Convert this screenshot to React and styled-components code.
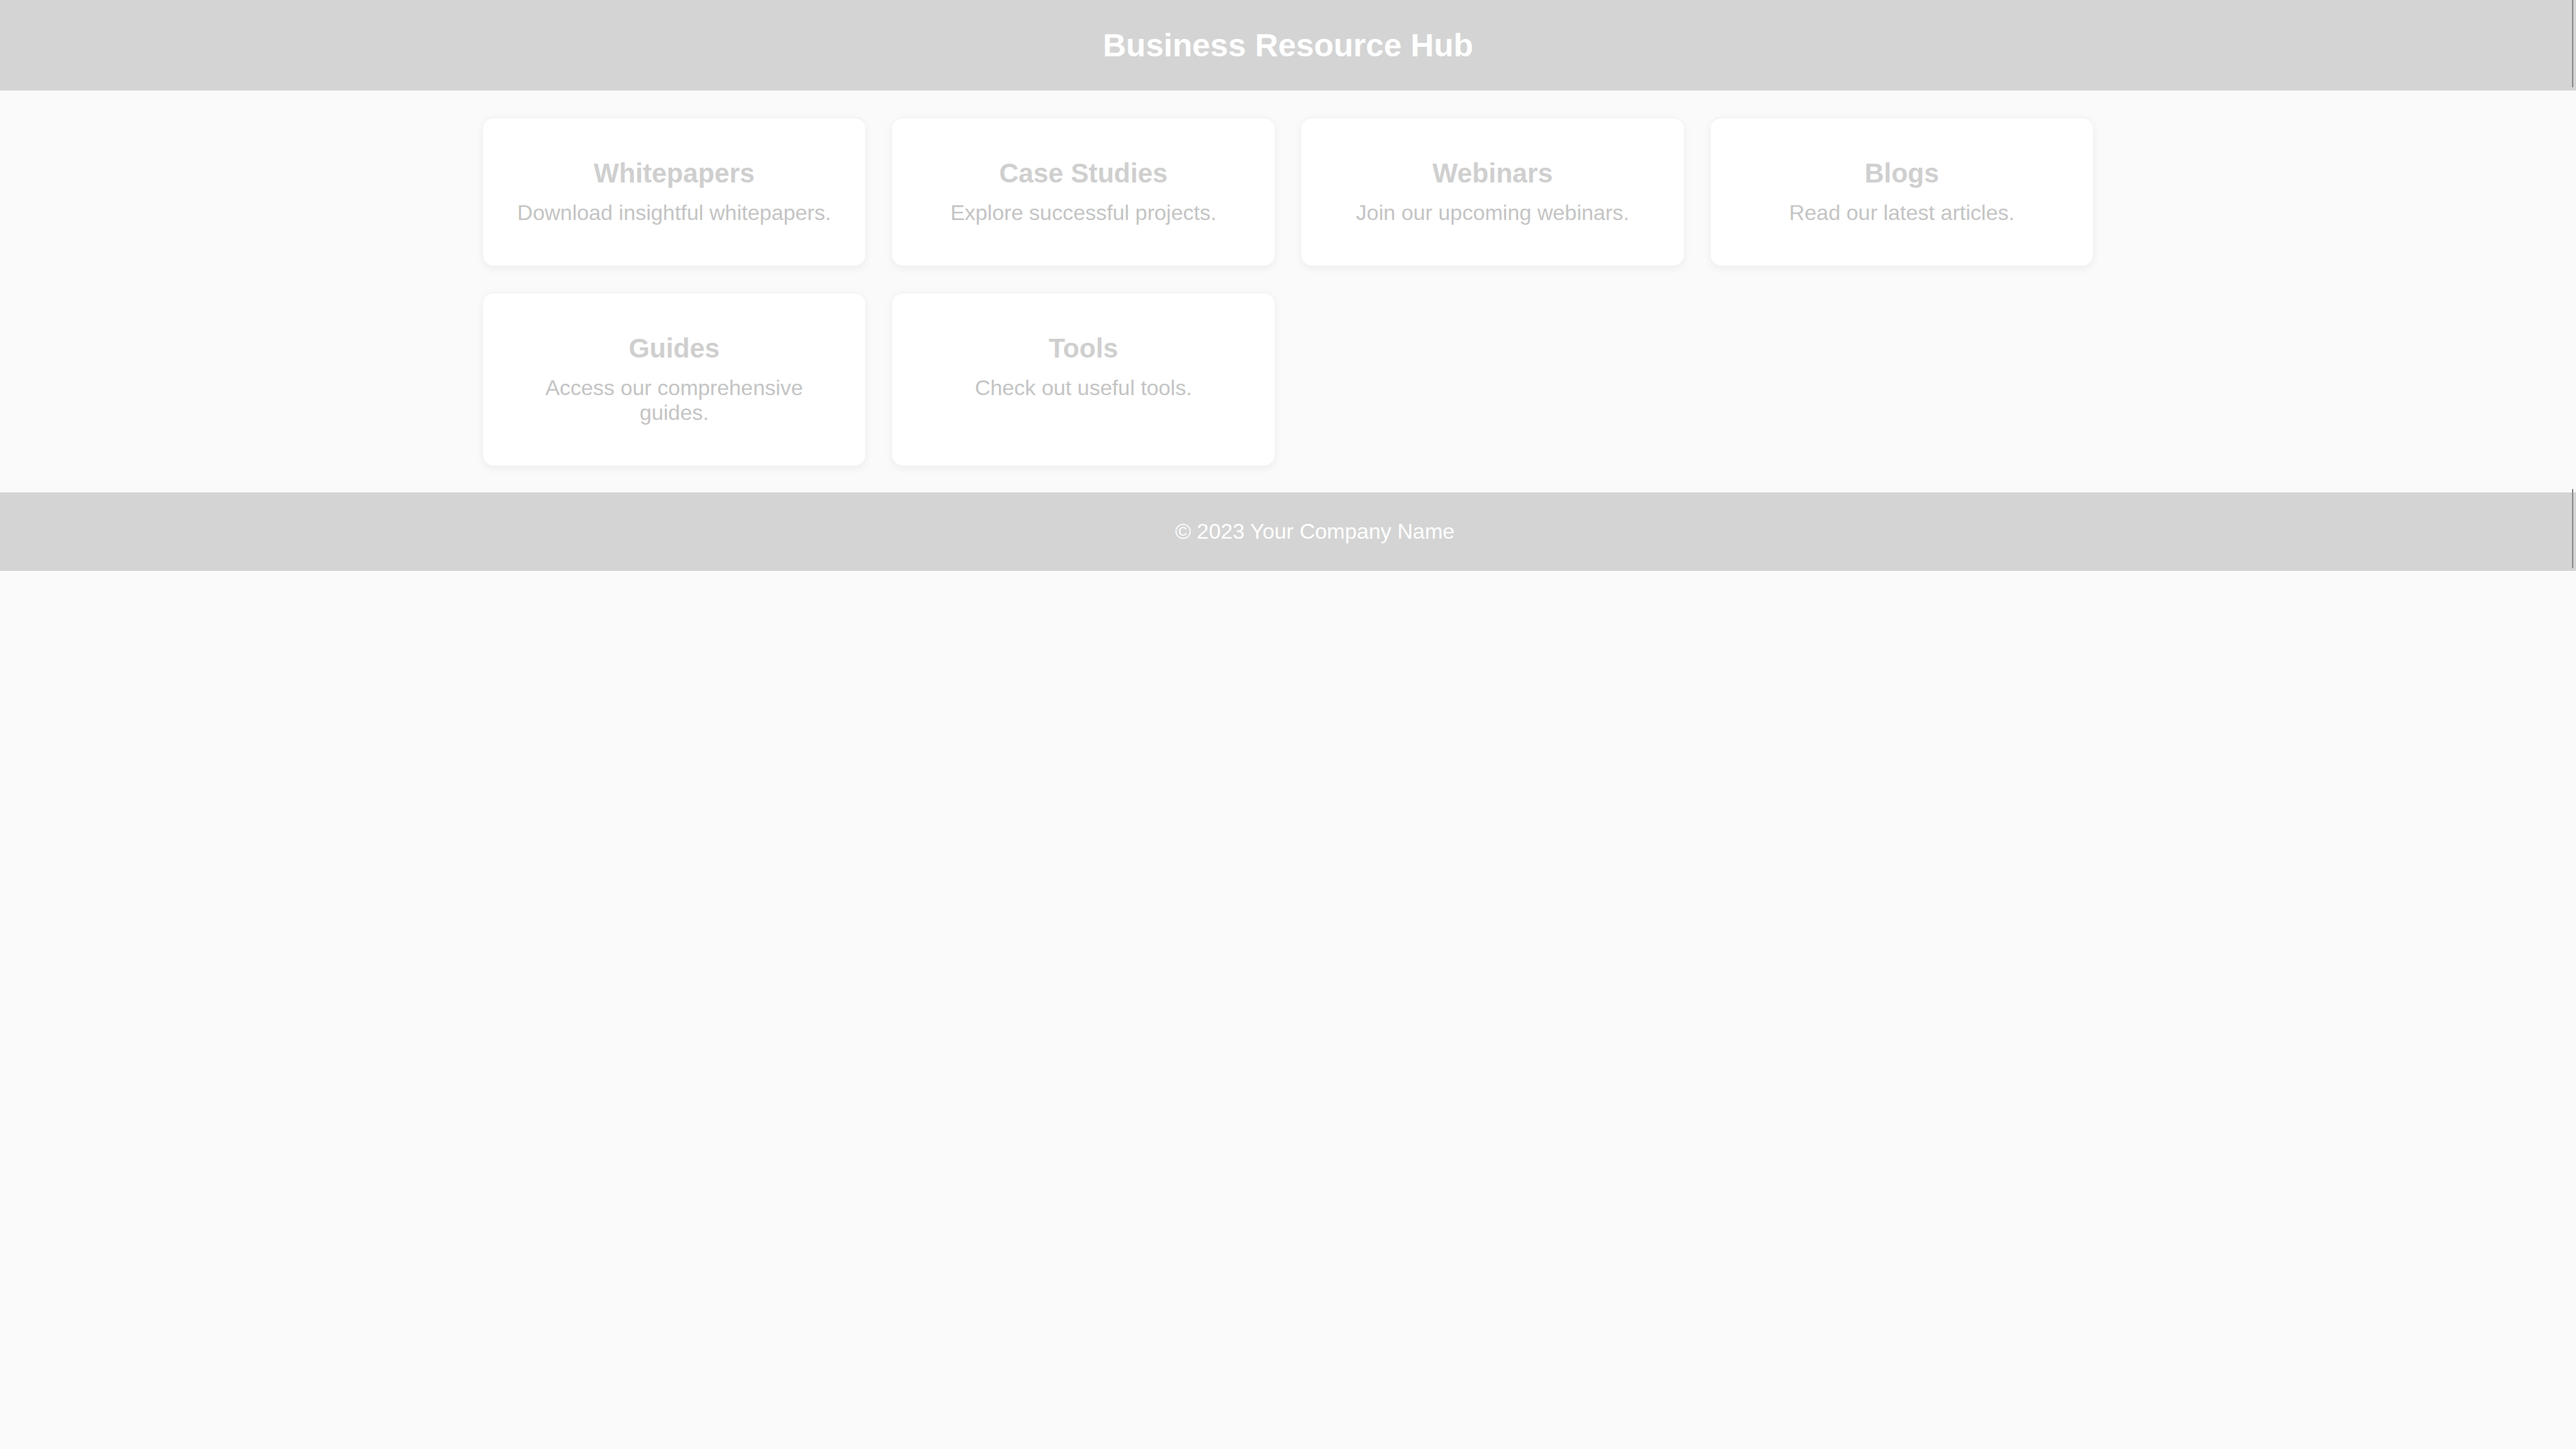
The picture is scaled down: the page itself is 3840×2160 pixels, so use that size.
import React from 'react';
import styled, { createGlobalStyle } from 'styled-components';

const resources = [
  { title: 'Whitepapers', text: 'Download insightful whitepapers.' },
  { title: 'Case Studies', text: 'Explore successful projects.' },
  { title: 'Webinars', text: 'Join our upcoming webinars.' },
  { title: 'Blogs', text: 'Read our latest articles.' },
  { title: 'Guides', text: 'Access our comprehensive guides.' },
  { title: 'Tools', text: 'Check out useful tools.' },
];

const App = () => {
  return (
    <>
      <GlobalStyle />
      <Header>
        <Title>Business Resource Hub</Title>
      </Header>
      <Main>
        {resources.map((r) => (
          <Card key={r.title}>
            <CardTitle>{r.title}</CardTitle>
            <CardText>{r.text}</CardText>
          </Card>
        ))}
      </Main>
      <Footer>
        <FooterText>© 2023 Your Company Name</FooterText>
      </Footer>
    </>
  );
};

export default App;

const GlobalStyle = createGlobalStyle`
  body {
    margin: 0;
    background: #fafafa;
    font-family: "Liberation Sans", Arial, sans-serif;
  }
`;

const Bar = styled.div`
  position: relative;
  background: #d4d4d4;
  color: #ffffff;
  text-align: center;
  padding: 40px 0;

  &::after {
    content: '';
    position: absolute;
    right: 4px;
    width: 2px;
    background: #8a8a8a;
  }
`;

const Header = styled(Bar).attrs({ as: 'header' })`
  &::after {
    top: 0;
    bottom: 5px;
  }
`;

const Footer = styled(Bar).attrs({ as: 'footer' })`
  padding-left: 80px;

  &::after {
    top: -5px;
    bottom: 4px;
  }
`;

const Title = styled.h1`
  margin: 0;
  font-size: 48px;
  font-weight: 700;
`;

const FooterText = styled.p`
  margin: 0;
  font-size: 32px;
`;

const Main = styled.main`
  max-width: 2400px;
  margin: 0 auto;
  padding: 40px 0;
  display: grid;
  grid-template-columns: repeat(4, 1fr);
  gap: 40px;
`;

const Card = styled.div`
  background: #ffffff;
  border-radius: 16px;
  padding: 60px 40px;
  text-align: center;
  box-shadow: 0 4px 14px rgba(0, 0, 0, 0.06);
  border-top: 1px solid #ececec;
`;

const CardTitle = styled.h3`
  margin: 0 0 18px;
  font-size: 40px;
  font-weight: 700;
  color: #cfcfcf;
`;

const CardText = styled.p`
  margin: 0;
  font-size: 32px;
  color: #c4c4c4;
`;
